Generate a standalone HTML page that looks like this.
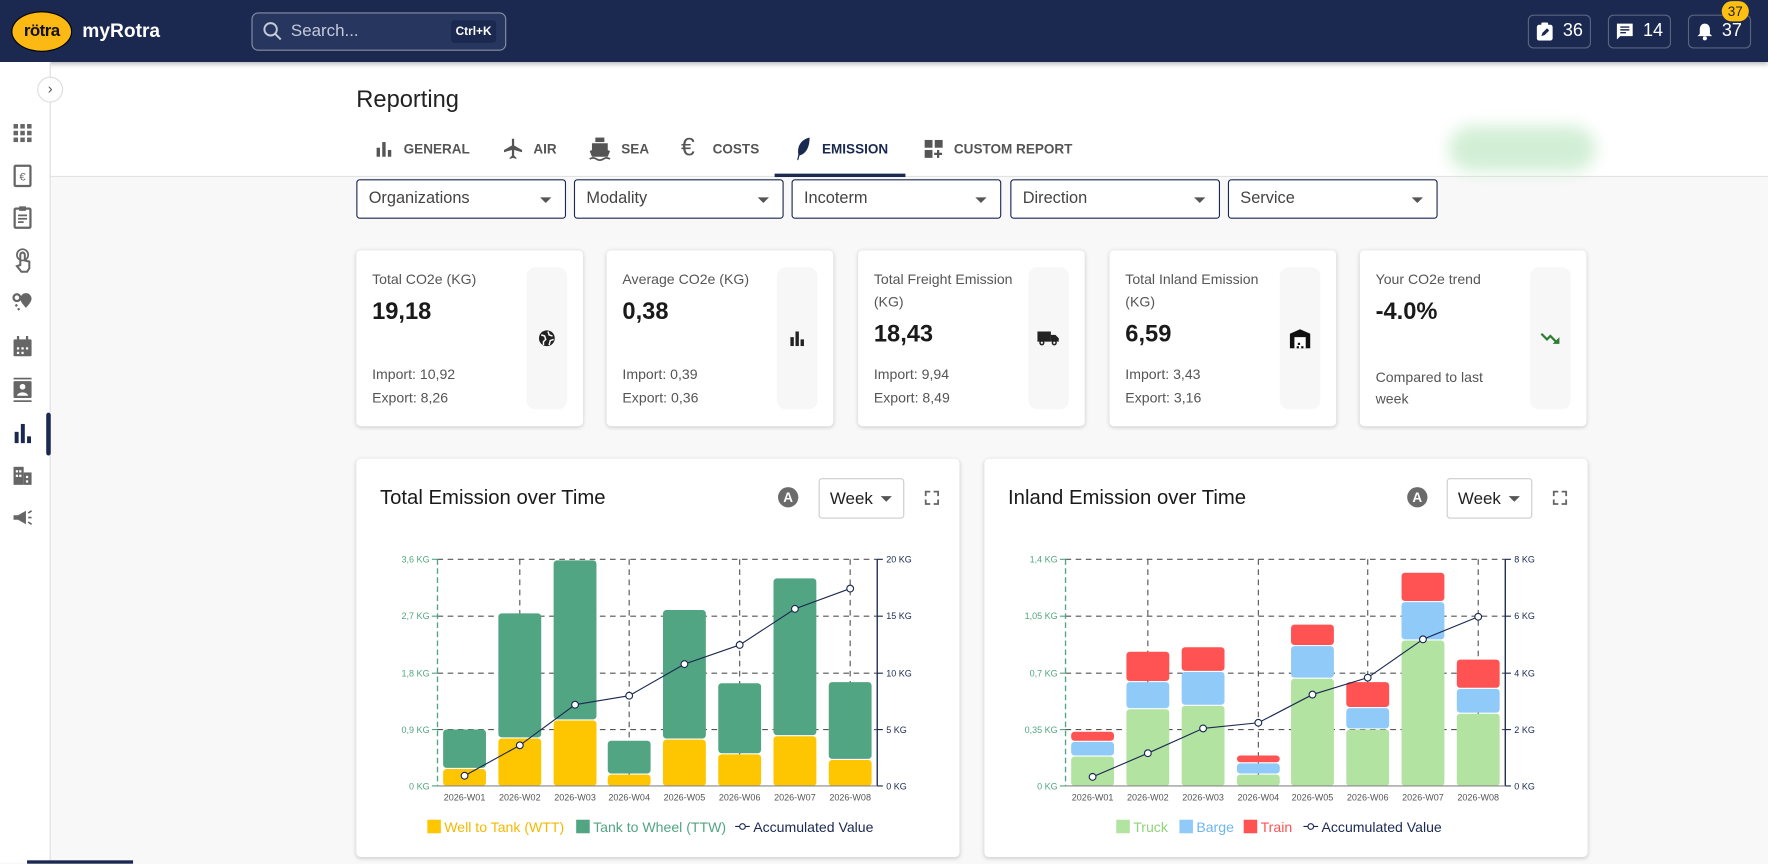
<!DOCTYPE html>
<html><head><meta charset="utf-8">
<style>
*{box-sizing:border-box;margin:0;padding:0}
html,body{width:1768px;height:863px;overflow:hidden;background:#f8f8f8;font-family:"Liberation Sans",Arial,sans-serif}
#w{position:absolute;left:0;top:0;width:1568px;height:765px;transform:scale(1.12755);transform-origin:0 0;background:#f8f8f8}
.a{position:absolute}
.hdr{left:0;top:0;width:1568px;height:55px;background:#1b2951;box-shadow:0 2px 4px rgba(0,0,0,.25)}
.hb{top:13px;height:30px;width:56px;border:1px solid rgba(255,255,255,.28);border-radius:5px;color:#fff;font-size:16px;display:flex;align-items:center;justify-content:center;gap:8px}
.side{left:0;top:55px;width:45px;height:710px;border-right:1px solid #ddd;background:#fff}
.tab{top:125px;font-size:12px;color:#555;font-weight:bold}
.dd{top:159px;height:35px;width:186px;border:1px solid #1b2951;border-radius:3px;background:#fff;font-size:14.5px;color:#444;padding:8px 10px}
.dd:after{content:"";position:absolute;right:12px;top:15px;border-left:5px solid transparent;border-right:5px solid transparent;border-top:5px solid #555}
.card{background:#fff;border-radius:4px;box-shadow:0 1px 4px rgba(0,0,0,.18)}
.kp{top:222px;height:156px;width:201px}
.kt{position:absolute;left:14px;top:16px;font-size:12.5px;color:#555;line-height:20px;width:130px}
.kv{position:absolute;left:14px;font-size:21px;font-weight:bold;color:#1a1a1a}
.ks{position:absolute;left:14px;font-size:12.5px;color:#555;line-height:21px}
.kip{position:absolute;left:151px;top:15px;width:36px;height:126px;background:#f7f7f7;border-radius:8px;display:flex;align-items:center;justify-content:center}
.ct{position:absolute;left:21px;top:24px;font-size:18px;color:#1a1a1a;font-weight:500}
.wk{position:absolute;top:17px;width:76px;height:36px;border:1px solid #ccc;border-radius:3px;font-size:15px;color:#222;padding:9px 9px}
.wk:after{content:"";position:absolute;right:10px;top:15px;border-left:5px solid transparent;border-right:5px solid transparent;border-top:5px solid #555}
.ac{position:absolute;top:25px;width:18px;height:18px;border-radius:50%;background:#6b6b6b;color:#fff;font-size:12px;font-weight:bold;text-align:center;line-height:18px}
</style></head><body><div id="w">

<div class="a" style="left:45px;top:55px;width:1523px;height:102px;background:#fff;border-bottom:1px solid #e2e2e2"></div>
<div class="a" style="left:1285px;top:112px;width:130px;height:40px;border-radius:20px;background:#bfe8c4;filter:blur(7px);opacity:.7"></div>

<div class="a hdr"></div>
<div class="a" style="left:10px;top:10px;width:54px;height:36px;border-radius:50%;background:#fdb913;border:1.5px solid #000;text-align:center;font:bold 15px 'Liberation Sans';color:#111;line-height:34px;letter-spacing:-.5px">rötra</div>
<div class="a" style="left:73px;top:18px;color:#fff;font-size:17px;font-weight:bold">myRotra</div>
<div class="a" style="left:223px;top:11px;width:226px;height:34px;border:1px solid rgba(255,255,255,.45);border-radius:6px;background:#27365e"></div>
<svg class="a" style="left:233px;top:19px" width="18" height="18" viewBox="0 0 18 18"><circle cx="7" cy="7" r="5.5" fill="none" stroke="#c5cadb" stroke-width="1.7"/><path d="M11 11l5 5" stroke="#c5cadb" stroke-width="1.8"/></svg>
<div class="a" style="left:258px;top:19px;color:#c5cadb;font-size:15px">Search...</div>
<div class="a" style="left:400px;top:18px;width:40px;height:20px;background:#1b2951;border-radius:3px;color:#fff;font-size:10.5px;font-weight:bold;text-align:center;line-height:20px">Ctrl+K</div>
<div class="a hb" style="left:1355px"><svg width="16" height="16" viewBox="0 0 16 16"><rect x="1" y="2" width="14" height="14" rx="2" fill="#fff"/><rect x="5" y="0" width="6" height="4" rx="1" fill="#fff"/><path d="M5 12l1-3 4-4 2 2-4 4z" fill="#1b2951"/></svg>36</div>
<div class="a hb" style="left:1426px"><svg width="16" height="16" viewBox="0 0 16 16"><path d="M1 1h14v11H4l-3 3z" fill="#fff"/><path d="M4 4h8M4 6.5h8M4 9h5" stroke="#1b2951" stroke-width="1.3"/></svg>14</div>
<div class="a hb" style="left:1497px"><svg width="14" height="16" viewBox="0 0 14 16"><path d="M7 1c3 0 4.5 2.5 4.5 5v4l2 2H.5l2-2V6C2.5 3.5 4 1 7 1z" fill="#fff"/><circle cx="7" cy="14" r="1.8" fill="#fff"/></svg>37</div>
<div class="a" style="left:1527px;top:1px;width:24px;height:18px;border-radius:9px;background:#fdc010;color:#222;font-size:12px;text-align:center;line-height:18px">37</div>

<div class="a side"></div>
<div class="a" style="left:33px;top:68px;width:23px;height:23px;border-radius:50%;border:1px solid #ddd;background:#fff;color:#555;font-size:13px;text-align:center;line-height:20px">›</div>
<div class="a" style="left:41px;top:366px;width:4px;height:38px;background:#1b2951;border-radius:2px"></div>
<svg class="a" style="left:10px;top:108px" width="20" height="370" viewBox="0 0 20 370" fill="#666">
<g><rect x="2" y="2" width="4" height="4"/><rect x="8" y="2" width="4" height="4"/><rect x="14" y="2" width="4" height="4"/><rect x="2" y="8" width="4" height="4"/><rect x="8" y="8" width="4" height="4"/><rect x="14" y="8" width="4" height="4"/><rect x="2" y="14" width="4" height="4"/><rect x="8" y="14" width="4" height="4"/><rect x="14" y="14" width="4" height="4"/></g>
<rect x="3" y="39" width="14" height="18" rx="1" fill="none" stroke="#666" stroke-width="2"/><text x="10" y="52" font-size="10" text-anchor="middle" fill="#666" font-family="Liberation Sans">€</text>
<rect x="3" y="77" width="14" height="17" rx="1" fill="none" stroke="#666" stroke-width="2"/><rect x="7" y="75" width="6" height="4"/><path d="M6 83h8M6 86h8M6 89h5" stroke="#666" stroke-width="1.5"/>
<path d="M8 127v-9a2 2 0 014 0v5l4 1v6l-2 3H9l-4-5z" fill="none" stroke="#666" stroke-width="1.8"/><circle cx="10" cy="118" r="5" fill="none" stroke="#666" stroke-width="1.5"/>
<circle cx="5" cy="156" r="3" fill="none" stroke="#666" stroke-width="2"/><path d="M13 152a5 5 0 015 5c0 3-5 8-5 8s-5-5-5-8a5 5 0 015-5z"/><path d="M4 162l3 5" stroke="#666" stroke-width="2" stroke-dasharray="2 2"/>
<rect x="2" y="193" width="16" height="15" rx="1"/><rect x="5" y="190" width="2" height="4"/><rect x="13" y="190" width="2" height="4"/><g fill="#fff"><rect x="5" y="200" width="2" height="2"/><rect x="9" y="200" width="2" height="2"/><rect x="13" y="200" width="2" height="2"/><rect x="5" y="204" width="2" height="2"/><rect x="9" y="204" width="2" height="2"/></g>
<rect x="2" y="230" width="16" height="15" rx="1"/><rect x="2" y="227" width="16" height="1.5"/><rect x="2" y="247" width="16" height="1.5"/><circle cx="10" cy="235" r="2.5" fill="#fff"/><path d="M5 243c1-4 9-4 10 0z" fill="#fff"/>
<g fill="#1b2951"><rect x="3" y="275" width="3.5" height="10"/><rect x="8.5" y="268" width="3.5" height="17"/><rect x="14" y="279" width="3.5" height="6"/></g>
<rect x="2" y="306" width="9" height="16"/><rect x="11" y="311" width="7" height="11"/><g fill="#fff"><rect x="4" y="309" width="2" height="2"/><rect x="7" y="309" width="2" height="2"/><rect x="4" y="313" width="2" height="2"/><rect x="7" y="313" width="2" height="2"/><rect x="13" y="314" width="2" height="2"/><rect x="13" y="318" width="2" height="2"/></g>
<path d="M2 349h4l7-4v12l-7-4H2z"/><path d="M15 347l3-2M15 351h3M15 355l3 2" stroke="#666" stroke-width="1.5"/>
</svg>
<div class="a" style="left:24px;top:763px;width:94px;height:3px;background:#1b2951"></div>

<div class="a" style="left:316px;top:77px;font-size:21px;color:#222">Reporting</div>
<svg class="a" style="left:333px;top:124px" width="16" height="16" viewBox="0 0 16 16" fill="#555"><rect x="1" y="7" width="3" height="8"/><rect x="6" y="2" width="3" height="13"/><rect x="11" y="9" width="3" height="6"/></svg>
<div class="a tab" style="left:358px">GENERAL</div>
<svg class="a" style="left:446px;top:122px" width="18" height="20" viewBox="0 0 18 20" fill="#555"><path d="M8 1h2v6l7 4v2l-7-2v5l2 2v1l-3-1-3 1v-1l2-2v-5l-7 2v-2l7-4z"/></svg>
<div class="a tab" style="left:473px">AIR</div>
<svg class="a" style="left:522px;top:121px" width="20" height="22" viewBox="0 0 20 22" fill="#555"><rect x="6" y="1" width="8" height="4"/><path d="M3 6h14v6l2 1-2 5H3l-2-5 2-1z"/><path d="M1 20q3-2 6 0t6 0 6 0" stroke="#555" fill="none" stroke-width="1.5"/></svg>
<div class="a tab" style="left:551px">SEA</div>
<div class="a" style="left:604px;top:118px;font-size:22px;color:#555">€</div>
<div class="a tab" style="left:632px">COSTS</div>
<svg class="a" style="left:705px;top:121px" width="14" height="22" viewBox="0 0 14 22" fill="#1b2951"><path d="M13 1C5 3 2 9 3 16L2 21h1l1-4C11 15 13 8 13 1z"/></svg>
<div class="a tab" style="left:729px;color:#1b2951">EMISSION</div>
<div class="a" style="left:687px;top:154px;width:116px;height:3px;background:#1b2951"></div>
<svg class="a" style="left:820px;top:124px" width="18" height="18" viewBox="0 0 18 18" fill="#555"><rect x="0" y="0" width="7" height="7"/><rect x="9" y="0" width="7" height="7"/><rect x="0" y="9" width="7" height="7"/><path d="M12 9v7M8.5 12.5h7" stroke="#555" stroke-width="2"/></svg>
<div class="a tab" style="left:846px">CUSTOM REPORT</div>

<div class="a dd" style="left:316px">Organizations</div>
<div class="a dd" style="left:509px">Modality</div>
<div class="a dd" style="left:702px">Incoterm</div>
<div class="a dd" style="left:896px">Direction</div>
<div class="a dd" style="left:1089px">Service</div>

<div class="a card kp" style="left:316px"><div class="kt">Total CO2e (KG)</div><div class="kv" style="top:43px">19,18</div><div class="ks" style="top:100px">Import: 10,92<br>Export: 8,26</div><div class="kip"><svg width="16" height="16" viewBox="0 0 16 16"><circle cx="8" cy="8" r="7" fill="#222"/><path d="M3 5l3 1 1 3-2 2v3M9 2l1 3 3 1M10 14l1-4 3-1" stroke="#fff" stroke-width="1.3" fill="none"/></svg></div></div>
<div class="a card kp" style="left:538px"><div class="kt">Average CO2e (KG)</div><div class="kv" style="top:43px">0,38</div><div class="ks" style="top:100px">Import: 0,39<br>Export: 0,36</div><div class="kip"><svg width="14" height="14" viewBox="0 0 14 14" fill="#222"><rect x="1" y="6" width="3" height="8"/><rect x="5.5" y="1" width="3" height="13"/><rect x="10" y="8" width="3" height="6"/></svg></div></div>
<div class="a card kp" style="left:761px"><div class="kt">Total Freight Emission (KG)</div><div class="kv" style="top:63px">18,43</div><div class="ks" style="top:100px">Import: 9,94<br>Export: 8,49</div><div class="kip"><svg width="20" height="14" viewBox="0 0 20 14" fill="#222"><rect x="0" y="1" width="12" height="9"/><path d="M12 4h4l3 3v3h-7z"/><circle cx="4" cy="11" r="2.3"/><circle cx="15" cy="11" r="2.3"/><circle cx="4" cy="11" r="1" fill="#f7f7f7"/><circle cx="15" cy="11" r="1" fill="#f7f7f7"/></svg></div></div>
<div class="a card kp" style="left:984px"><div class="kt">Total Inland Emission (KG)</div><div class="kv" style="top:63px">6,59</div><div class="ks" style="top:100px">Import: 3,43<br>Export: 3,16</div><div class="kip"><svg width="20" height="18" viewBox="0 0 20 18" fill="#111"><path d="M1 5l9-4 9 4v13H1z"/><rect x="5" y="8" width="10" height="10" fill="#fff"/><rect x="8" y="13" width="2" height="2"/><rect x="11" y="16" width="2" height="2"/><rect x="7" y="16" width="2" height="2"/></svg></div></div>
<div class="a card kp" style="left:1206px"><div class="kt">Your CO2e trend</div><div class="kv" style="top:43px">-4.0%</div><div class="ks" style="top:104px;line-height:19px">Compared to last<br>week</div><div class="kip"><svg width="18" height="12" viewBox="0 0 18 12"><path d="M1 2l5 5 3-3 6 6" stroke="#2e7d32" stroke-width="2" fill="none"/><path d="M17 5v6h-6z" fill="#2e7d32"/></svg></div></div>

<div class="a card" style="left:316px;top:407px;width:535px;height:353px"><div class="ct">Total Emission over Time</div><div class="ac" style="left:374px">A</div><div class="wk" style="left:410px">Week</div></div>
<div class="a card" style="left:873px;top:407px;width:535px;height:353px"><div class="ct">Inland Emission over Time</div><div class="ac" style="left:375px">A</div><div class="wk" style="left:410px">Week</div></div>

<svg class="a" style="left:0;top:0" width="1568" height="765" font-family="Liberation Sans">
<g stroke="#666" stroke-width="1.6" fill="none"><path d="M821 440v-4h4M828 436h4v4M832 443v4h-4M825 447h-4v-4"/><path d="M1378 440v-4h4M1385 436h4v4M1389 443v4h-4M1382 447h-4v-4"/></g>
<g stroke="#555" stroke-width="1" stroke-dasharray="5 4" fill="none">
<path d="M388 496H778M388 546.5H778M388 597H778M388 647H778"/>
<path d="M461 496V697M558 496V697M656 496V697M754 496V697"/>
<path d="M945 496H1335M945 546.5H1335M945 597H1335M945 647H1335"/>
<path d="M1018 496V697M1116 496V697M1213 496V697M1311 496V697"/>
</g>
<g fill="#52a582">
<rect x="393" y="647" width="38" height="34" rx="3"/><rect x="442" y="544" width="38" height="110" rx="3"/><rect x="491" y="497" width="38" height="141" rx="3"/><rect x="539" y="657" width="38" height="29" rx="3"/><rect x="588" y="541" width="38" height="114" rx="3"/><rect x="637" y="606" width="38" height="62" rx="3"/><rect x="686" y="513" width="38" height="139" rx="3"/><rect x="735" y="605" width="38" height="68" rx="3"/>
</g>
<g fill="#fec600">
<rect x="393" y="682" width="38" height="15" rx="3"/><rect x="442" y="655" width="38" height="42" rx="3"/><rect x="491" y="639" width="38" height="58" rx="3"/><rect x="539" y="687" width="38" height="10" rx="3"/><rect x="588" y="656" width="38" height="41" rx="3"/><rect x="637" y="669" width="38" height="28" rx="3"/><rect x="686" y="653" width="38" height="44" rx="3"/><rect x="735" y="674" width="38" height="23" rx="3"/>
</g>
<path d="M388 496V697" stroke="#52a582" stroke-width="1.2" stroke-dasharray="5 3"/>
<path d="M778 496V697" stroke="#1b2951" stroke-width="1.2"/>
<path d="M388 697H778" stroke="#888" stroke-width="1"/>
<g stroke="#52a582"><path d="M383 496h5M383 546.5h5M383 597h5M383 647h5M383 697h5"/></g>
<g stroke="#1b2951"><path d="M778 496h5M778 546.5h5M778 597h5M778 647h5M778 697h5"/></g>
<g font-size="8" fill="#52a582" text-anchor="end"><text x="381" y="499">3,6 KG</text><text x="381" y="549">2,7 KG</text><text x="381" y="600">1,8 KG</text><text x="381" y="650">0,9 KG</text><text x="381" y="700">0 KG</text></g>
<g font-size="8" fill="#1b2951"><text x="786" y="499">20 KG</text><text x="786" y="549">15 KG</text><text x="786" y="600">10 KG</text><text x="786" y="650">5 KG</text><text x="786" y="700">0 KG</text></g>
<g font-size="8" fill="#555" text-anchor="middle"><text x="412" y="710">2026-W01</text><text x="461" y="710">2026-W02</text><text x="510" y="710">2026-W03</text><text x="558" y="710">2026-W04</text><text x="607" y="710">2026-W05</text><text x="656" y="710">2026-W06</text><text x="705" y="710">2026-W07</text><text x="754" y="710">2026-W08</text></g>
<polyline points="412,688 461,661 510,625 558,617 607,589 656,572 705,540 754,522" fill="none" stroke="#1b2951" stroke-width="1"/>
<g fill="#fff" stroke="#1b2951" stroke-width="1"><circle cx="412" cy="688" r="3"/><circle cx="461" cy="661" r="3"/><circle cx="510" cy="625" r="3"/><circle cx="558" cy="617" r="3"/><circle cx="607" cy="589" r="3"/><circle cx="656" cy="572" r="3"/><circle cx="705" cy="540" r="3"/><circle cx="754" cy="522" r="3"/></g>
<rect x="379" y="727" width="12" height="12" fill="#fec600"/><text x="394" y="738" font-size="12.5" fill="#f5b800">Well to Tank (WTT)</text>
<rect x="511" y="727" width="12" height="12" fill="#52a582"/><text x="526" y="738" font-size="12.5" fill="#52a582">Tank to Wheel (TTW)</text>
<path d="M652 733h13" stroke="#1b2951"/><circle cx="658.5" cy="733" r="2.5" fill="#fff" stroke="#1b2951"/><text x="668" y="738" font-size="12.5" fill="#1b2951">Accumulated Value</text>
<g fill="#b2e3a1"><rect x="950" y="671" width="38" height="26" rx="3"/><rect x="999" y="629" width="38" height="68" rx="3"/><rect x="1048" y="626" width="38" height="71" rx="3"/><rect x="1097" y="687" width="38" height="10" rx="3"/><rect x="1145" y="602" width="38" height="95" rx="3"/><rect x="1194" y="647" width="38" height="50" rx="3"/><rect x="1243" y="568" width="38" height="129" rx="3"/><rect x="1292" y="633" width="38" height="64" rx="3"/></g>
<g fill="#90caf9"><rect x="950" y="658" width="38" height="12" rx="3"/><rect x="999" y="605" width="38" height="23" rx="3"/><rect x="1048" y="596" width="38" height="29" rx="3"/><rect x="1097" y="677" width="38" height="9" rx="3"/><rect x="1145" y="573" width="38" height="28" rx="3"/><rect x="1194" y="628" width="38" height="18" rx="3"/><rect x="1243" y="534" width="38" height="33" rx="3"/><rect x="1292" y="611" width="38" height="21" rx="3"/></g>
<g fill="#ff5252"><rect x="950" y="649" width="38" height="8" rx="3"/><rect x="999" y="578" width="38" height="26" rx="3"/><rect x="1048" y="574" width="38" height="21" rx="3"/><rect x="1097" y="670" width="38" height="6" rx="3"/><rect x="1145" y="554" width="38" height="18" rx="3"/><rect x="1194" y="605" width="38" height="22" rx="3"/><rect x="1243" y="508" width="38" height="25" rx="3"/><rect x="1292" y="585" width="38" height="25" rx="3"/></g>
<path d="M945 496V697" stroke="#52a582" stroke-width="1.2" stroke-dasharray="5 3"/>
<path d="M1335 496V697" stroke="#1b2951" stroke-width="1.2"/>
<path d="M945 697H1335" stroke="#888" stroke-width="1"/>
<g stroke="#52a582"><path d="M940 496h5M940 546.5h5M940 597h5M940 647h5M940 697h5"/></g>
<g stroke="#1b2951"><path d="M1335 496h5M1335 546.5h5M1335 597h5M1335 647h5M1335 697h5"/></g>
<g font-size="8" fill="#52a582" text-anchor="end"><text x="938" y="499">1,4 KG</text><text x="938" y="549">1,05 KG</text><text x="938" y="600">0,7 KG</text><text x="938" y="650">0,35 KG</text><text x="938" y="700">0 KG</text></g>
<g font-size="8" fill="#1b2951"><text x="1343" y="499">8 KG</text><text x="1343" y="549">6 KG</text><text x="1343" y="600">4 KG</text><text x="1343" y="650">2 KG</text><text x="1343" y="700">0 KG</text></g>
<g font-size="8" fill="#555" text-anchor="middle"><text x="969" y="710">2026-W01</text><text x="1018" y="710">2026-W02</text><text x="1067" y="710">2026-W03</text><text x="1116" y="710">2026-W04</text><text x="1164" y="710">2026-W05</text><text x="1213" y="710">2026-W06</text><text x="1262" y="710">2026-W07</text><text x="1311" y="710">2026-W08</text></g>
<polyline points="969,689 1018,668 1067,646 1116,641 1164,616 1213,601 1262,567 1311,547" fill="none" stroke="#1b2951" stroke-width="1"/>
<g fill="#fff" stroke="#1b2951" stroke-width="1"><circle cx="969" cy="689" r="3"/><circle cx="1018" cy="668" r="3"/><circle cx="1067" cy="646" r="3"/><circle cx="1116" cy="641" r="3"/><circle cx="1164" cy="616" r="3"/><circle cx="1213" cy="601" r="3"/><circle cx="1262" cy="567" r="3"/><circle cx="1311" cy="547" r="3"/></g>
<rect x="990" y="727" width="12" height="12" fill="#b2e3a1"/><text x="1005" y="738" font-size="12.5" fill="#8fd37a">Truck</text>
<rect x="1046" y="727" width="12" height="12" fill="#90caf9"/><text x="1061" y="738" font-size="12.5" fill="#6fb5f0">Barge</text>
<rect x="1103" y="727" width="12" height="12" fill="#ff5252"/><text x="1118" y="738" font-size="12.5" fill="#ff5252">Train</text>
<path d="M1156 733h13" stroke="#1b2951"/><circle cx="1162.5" cy="733" r="2.5" fill="#fff" stroke="#1b2951"/><text x="1172" y="738" font-size="12.5" fill="#1b2951">Accumulated Value</text>
</svg>
</div></body></html>
